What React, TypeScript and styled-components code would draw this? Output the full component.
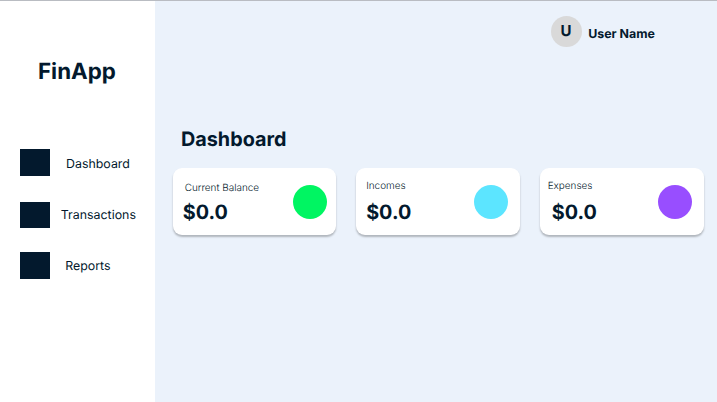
import React from "react";
import styled, { createGlobalStyle } from "styled-components";

const Global = createGlobalStyle`
  * { box-sizing: border-box; }
  body { margin: 0; font-family: Inter, sans-serif; color: #03192d; text-rendering: geometricPrecision; }
`;

const Page = styled.div`
  display: flex;
  width: 717px;
  height: 402px;
  overflow: hidden;
  border-top: 1px solid #b9bcc2;
  background: #ebf2fb;
`;

const Sidebar = styled.aside`
  width: 155px;
  flex: none;
  background: #fff;
`;

const Brand = styled.h1`
  margin: 57px 0 0 38px;
  font-size: 22.3px;
  line-height: 28px;
  font-weight: 700;
`;

const Nav = styled.nav`
  display: flex;
  flex-direction: column;
  margin: 63.4px 0 0 20px;
`;

const NavItem = styled.a<{ $gap: number; $after: number }>`
  display: flex;
  align-items: flex-start;
  gap: ${(p) => p.$gap}px;
  margin-bottom: ${(p) => p.$after}px;
  height: 26.6px;
  font-size: 12.4px;
  white-space: nowrap;
`;

const NavIcon = styled.span`
  width: 30.4px;
  height: 100%;
  flex: none;
  background: #03192d;
`;

const NavText = styled.span<{ $top: number }>`
  margin-top: ${(p) => p.$top}px;
  line-height: 16px;
`;

const Main = styled.main`
  flex: 1;
  min-width: 0;
`;

const Header = styled.header`
  display: flex;
  align-items: flex-start;
  padding: 14.6px 0 0 395.6px;
  height: 46px;
`;

const Avatar = styled.div`
  display: grid;
  justify-items: center;
  padding-top: 6px;
  width: 31px;
  height: 31px;
  border-radius: 50%;
  background: #d9d9d9;
  font-size: 15px;
  line-height: 18px;
  font-weight: 700;
`;

const UserName = styled.span`
  margin: 10.4px 0 0 6.6px;
  font-size: 12.4px;
  line-height: 16px;
  font-weight: 700;
  white-space: nowrap;
`;

const Title = styled.h2`
  margin: 79px 0 0 26px;
  font-size: 19.8px;
  line-height: 26px;
  font-weight: 700;
`;

const Cards = styled.section`
  display: grid;
  grid-template-columns: repeat(3, 163.5px);
  column-gap: 20.2px;
  margin: 16.4px 0 0 17.7px;
`;

const Card = styled.article`
  display: flex;
  height: 67px;
  border-radius: 9px;
  background: #fff;
  box-shadow: 0 2px 2px rgba(0, 0, 0, 0.25);
`;

const Info = styled.div`
  flex: 1;
`;

const Label = styled.div<{ $x: number; $y: number }>`
  padding: ${(p) => p.$y}px 0 0 ${(p) => p.$x}px;
  height: 31.6px;
  font-size: 9.95px;
  line-height: 12px;
  font-weight: 300;
  color: #03192d;
  white-space: nowrap;
`;

const Amount = styled.div<{ $x: number }>`
  padding-left: ${(p) => p.$x}px;
  font-size: 19.8px;
  line-height: 24px;
  font-weight: 700;
`;

const Dot = styled.span<{ $color: string; $right: number; $top: number }>`
  width: 34.2px;
  height: 34.2px;
  margin: ${(p) => p.$top}px ${(p) => p.$right}px 0 0;
  border-radius: 50%;
  background: ${(p) => p.$color};
`;

const navigation = [
  { label: "Dashboard", gap: 15.6, top: 6.8, after: 25.8 },
  { label: "Transactions", gap: 10.4, top: 5.6, after: 24 },
  { label: "Reports", gap: 14.8, top: 5.8, after: 0 },
];

const summaries = [
  { label: "Current Balance", x: 12, y: 13.6, amountX: 10, color: "#00f562", right: 9.2, top: 16.2 },
  { label: "Incomes", x: 9.8, y: 11.8, amountX: 9.8, color: "#5ce5ff", right: 11.9, top: 16.9 },
  { label: "Expenses", x: 7.6, y: 11.8, amountX: 11.8, color: "#984eff", right: 11.6, top: 16.9 },
];

export default function App() {
  return (
    <>
      <Global />
      <Page>
        <Sidebar>
          <Brand>FinApp</Brand>
          <Nav>
            {navigation.map((item) => (
              <NavItem key={item.label} $gap={item.gap} $after={item.after}>
                <NavIcon />
                <NavText $top={item.top}>{item.label}</NavText>
              </NavItem>
            ))}
          </Nav>
        </Sidebar>
        <Main>
          <Header>
            <Avatar>U</Avatar>
            <UserName>User Name</UserName>
          </Header>
          <Title>Dashboard</Title>
          <Cards>
            {summaries.map((s) => (
              <Card key={s.label}>
                <Info>
                  <Label $x={s.x} $y={s.y}>{s.label}</Label>
                  <Amount $x={s.amountX}>$0.0</Amount>
                </Info>
                <Dot $color={s.color} $right={s.right} $top={s.top} />
              </Card>
            ))}
          </Cards>
        </Main>
      </Page>
    </>
  );
}
